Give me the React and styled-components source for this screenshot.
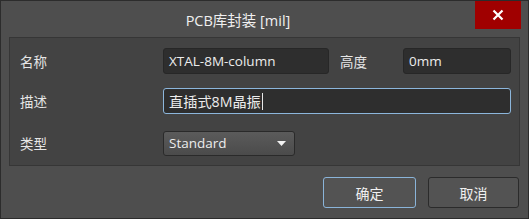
import React from "react";
import styled, { createGlobalStyle } from "styled-components";

const Global = createGlobalStyle`
  html, body { margin: 0; padding: 0; background: #4e4e4e; }
  * { box-sizing: border-box; }
  body { font-family: "Open Sans", "Noto Sans CJK SC", sans-serif; color: #e8e8e8; }
`;

const Window = styled.div`
  width: 529px;
  height: 219px;
  background: #4e4e4e;
  border: 1px solid #2c2c2c;
  display: flex;
  flex-direction: column;
`;

const TitleBar = styled.div`
  height: 36px;
  display: flex;
  align-items: flex-start;
  padding-right: 7px;
`;

const Title = styled.div`
  flex: 1;
  text-align: center;
  font-size: 14.5px;
  line-height: 39px;
  color: #f0f0f0;
`;

const CloseButton = styled.div`
  width: 46px;
  height: 28px;
  background: #a00000;
  display: flex;
  align-items: center;
  justify-content: center;
`;

const Panel = styled.div`
  margin: 0 8px 0 8px;
  background: #434343;
  border: 1px solid #363636;
  padding: 10px 7px 9px 10px;
  display: flex;
  flex-direction: column;
`;

const Row = styled.div`
  display: flex;
  align-items: center;
  height: 26px;
  margin-top: ${(p) => p.$gap || 0}px;
`;

const Label = styled.div`
  width: ${(p) => p.$w}px;
  flex: none;
  font-size: 13.5px;
  color: #e6e6e6;
  padding-left: ${(p) => p.$pl || 0}px;
`;

const Input = styled.div`
  width: ${(p) => p.$w}px;
  height: 26px;
  flex: none;
  background: #2e2e2e;
  border: 1px solid ${(p) => (p.$focus ? "#8cb6dc" : "#272727")};
  border-radius: 3px;
  padding-left: 5px;
  display: flex;
  align-items: center;
  font-size: ${(p) => (p.$big ? 14.2 : 13.5)}px;
  color: #ececec;
  white-space: nowrap;
`;

const Caret = styled.span`
  display: inline-block;
  width: 1px;
  height: 17px;
  background: #e8e8e8;
  margin-left: 1px;
`;

const Select = styled.div`
  width: 132px;
  height: 25px;
  flex: none;
  background: linear-gradient(#5b5b5b, #4b4b4b);
  border: 1px solid #2a2a2a;
  border-radius: 3px;
  padding: 0 8px 0 5px;
  display: flex;
  align-items: center;
  justify-content: space-between;
  font-size: 13.5px;
  color: #ececec;
`;

const Footer = styled.div`
  display: flex;
  justify-content: flex-end;
  gap: 12px;
  padding: 11px 9px 0 0;
`;

const Button = styled.div`
  width: ${(p) => p.$w}px;
  height: 31px;
  background: #535353;
  border: 1px solid ${(p) => (p.$primary ? "#8ab4d9" : "#2b2b2b")};
  border-radius: 3px;
  display: flex;
  align-items: center;
  justify-content: center;
  font-size: 14px;
  color: #f0f0f0;
`;

export default function App() {
  return (
    <>
      <Global />
      <Window>
        <TitleBar>
          <Title>PCB库封装 [mil]</Title>
          <CloseButton>
            <svg width="12" height="12" viewBox="0 0 12 12">
              <path d="M1.5 1.5 L10.5 10.5 M10.5 1.5 L1.5 10.5" stroke="#fff" strokeWidth="2.2" />
            </svg>
          </CloseButton>
        </TitleBar>
        <Panel>
          <Row>
            <Label $w={143}>名称</Label>
            <Input $w={166}>XTAL-8M-column</Input>
            <Label $w={74} $pl={11}>高度</Label>
            <Input $w={108}>0mm</Input>
          </Row>
          <Row $gap={14}>
            <Label $w={143}>描述</Label>
            <Input $w={348} $focus $big>
              直插式8M晶振
              <Caret />
            </Input>
          </Row>
          <Row $gap={16}>
            <Label $w={143}>类型</Label>
            <Select>
              <span>Standard</span>
              <svg width="9" height="5" viewBox="0 0 9 5">
                <path d="M0 0 L9 0 L4.5 5 Z" fill="#f2f2f2" />
              </svg>
            </Select>
          </Row>
        </Panel>
        <Footer>
          <Button $w={93} $primary>确定</Button>
          <Button $w={91}>取消</Button>
        </Footer>
      </Window>
    </>
  );
}
